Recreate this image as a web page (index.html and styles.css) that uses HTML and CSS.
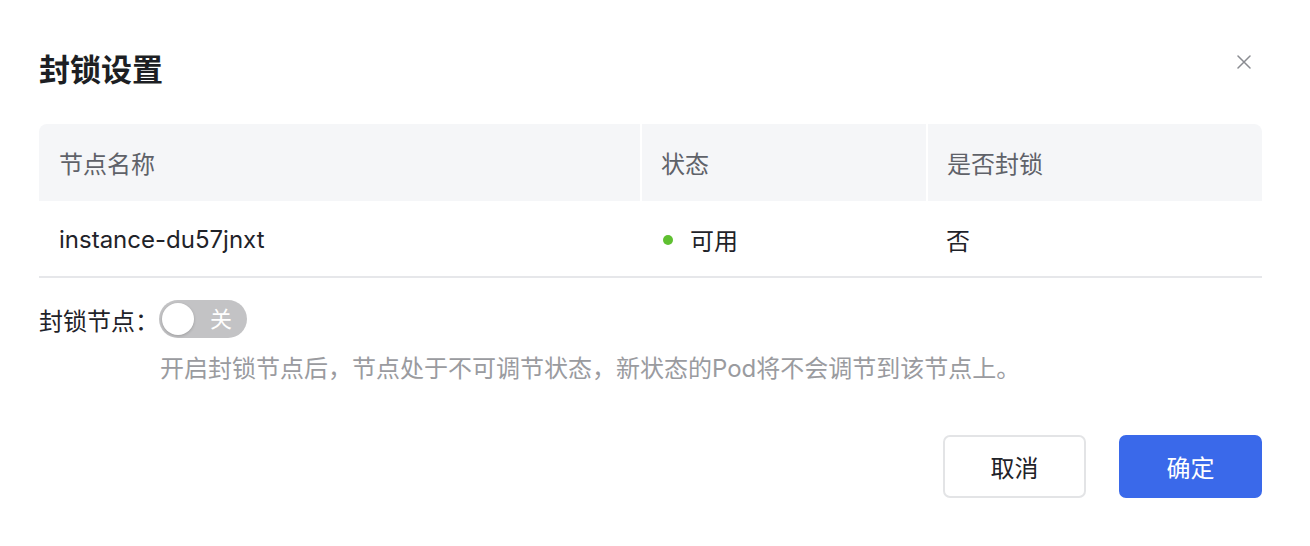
FILE: index.html
```html
<!DOCTYPE html>
<html lang="zh-CN">
<head>
    <meta charset="UTF-8">
    <meta name="viewport" content="width=device-width, initial-scale=1.0">
    <title>封锁设置</title>
    <link rel="stylesheet" href="styles.css">
</head>
<body>
    <div class="modal">
        <div class="modal-header">
            <h1 class="modal-title">封锁设置</h1>
            <button class="modal-close" aria-label="关闭">
                <svg width="14" height="14" viewBox="0 0 14 14">
                    <path d="M1 1L13 13M13 1L1 13" stroke="#8a8c91" stroke-width="1.5" stroke-linecap="round"/>
                </svg>
            </button>
        </div>

        <div class="node-table">
            <div class="cell head">节点名称</div>
            <div class="cell head">状态</div>
            <div class="cell head">是否封锁</div>

            <div class="cell">instance-du57jnxt</div>
            <div class="cell"><span class="dot"></span>可用</div>
            <div class="cell">否</div>
        </div>

        <div class="form-row">
            <span class="form-label">封锁节点：</span>
            <span class="switch">
                <span class="knob"></span>
                <span class="switch-text">关</span>
            </span>
        </div>
        <p class="form-help">开启封锁节点后，节点处于不可调节状态，新状态的Pod将不会调节到该节点上。</p>

        <div class="modal-footer">
            <button class="btn">取消</button>
            <button class="btn btn-primary">确定</button>
        </div>
    </div>
</body>
</html>
```

FILE: styles.css
```css
body {
    margin: 0;
    background: #fff;
    font-family: "Inter", "Noto Sans CJK SC", sans-serif;
    font-size: 24px;
    color: #1f2329;
}

.modal {
    padding: 48px 48px 0 39px;
}

.modal-header {
    display: flex;
    justify-content: space-between;
    align-items: flex-start;
    height: 44px;
    margin-bottom: 32px;
}

.modal-title {
    margin: 0;
    font-size: 31px;
    line-height: 44px;
    font-weight: 600;
    color: #1d1f24;
}

.modal-close {
    margin-top: 7px;
    margin-right: 11px;
    padding: 0;
    border: none;
    background: none;
    width: 14px;
    height: 14px;
    cursor: pointer;
}

.node-table {
    display: grid;
    grid-template-columns: 601px 286px 1fr;
}

.cell {
    display: flex;
    align-items: center;
    height: 77px;
    padding-top: 2px;
    box-sizing: border-box;
    padding-left: 20px;
    border-bottom: 2px solid #e6e7ea;
}

.cell.head {
    height: 77px;
    padding-top: 0;
    background: #f5f6f8;
    color: #5f6269;
    border-bottom: none;
}

.cell.head:first-child {
    border-top-left-radius: 8px;
}

.cell.head:nth-child(3) {
    border-top-right-radius: 8px;
}

.cell.head + .cell.head {
    border-left: 2px solid #fff;
    padding-left: 19px;
}

.cell:nth-child(5) {
    padding-left: 23px;
}

.dot {
    width: 10px;
    height: 10px;
    border-radius: 50%;
    background: #5fc031;
    margin-right: 17px;
}

.form-row {
    display: flex;
    align-items: center;
    margin-top: 22px;
    height: 38px;
}

.switch {
    position: relative;
    display: inline-flex;
    align-items: center;
    justify-content: flex-end;
    width: 88px;
    height: 38px;
    border-radius: 19px;
    background: #c3c3c5;
    box-sizing: border-box;
    padding-right: 15px;
}

.knob {
    position: absolute;
    left: 3px;
    top: 3px;
    width: 32px;
    height: 32px;
    border-radius: 50%;
    background: #fff;
    box-shadow: 0 1px 3px rgba(0, 0, 0, 0.2);
}

.switch-text {
    color: #fff;
    font-size: 22px;
    line-height: 1;
}

.form-help {
    margin: 13px 0 0 121px;
    line-height: 36px;
    color: #9a9b9f;
}

.modal-footer {
    display: flex;
    justify-content: flex-end;
    gap: 33px;
    margin-top: 48px;
}

.btn {
    width: 143px;
    height: 63px;
    border: 2px solid #e3e4e6;
    border-radius: 7px;
    background: #fff;
    font-family: inherit;
    font-size: 24px;
    color: #1f2329;
    cursor: pointer;
}

.btn-primary {
    background: #3a69ea;
    border-color: #3a69ea;
    color: #fff;
}
```
